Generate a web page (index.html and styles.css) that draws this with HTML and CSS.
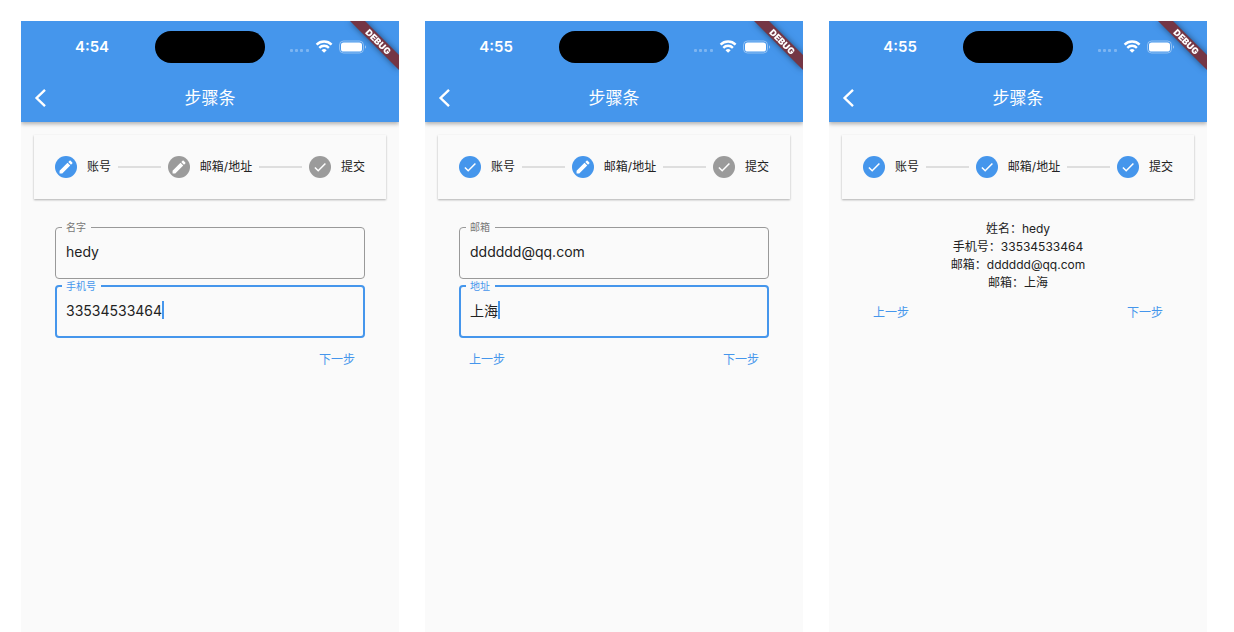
FILE: index.html
```html
<!DOCTYPE html>
<html lang="zh-CN">
<head>
    <meta charset="UTF-8">
    <meta name="viewport" content="width=device-width, initial-scale=1.0">
    <title>步骤条</title>
    <link rel="stylesheet" href="styles.css">
</head>
<body>
    <!-- Iconos compartidos -->
    <svg class="sprite" aria-hidden="true">
        <symbol id="edit" viewBox="0 0 22 22">
            <circle cx="11" cy="11" r="11" fill="currentColor" />
            <path transform="translate(2.4 2.4) scale(.72)" fill="#fff" d="M3 17.25V21h3.75L17.81 9.94l-3.75-3.75L3 17.25zM20.71 7.04c.39-.39.39-1.02 0-1.41l-2.34-2.34c-.39-.39-1.02-.39-1.41 0l-1.83 1.83 3.75 3.75 1.83-1.83z" />
        </symbol>
        <symbol id="check" viewBox="0 0 22 22">
            <circle cx="11" cy="11" r="11" fill="currentColor" />
            <path d="M5.9 11.5l3.3 3.3 7.2-7.4" fill="none" stroke="#fff" stroke-width="1.5" />
        </symbol>
        <symbol id="back" viewBox="0 0 12 18">
            <path d="M11 .9L2.6 9l8.4 8.1" fill="none" stroke="#fff" stroke-width="2.4" />
        </symbol>
        <symbol id="signal" viewBox="0 0 78 14">
            <g fill="#fff" fill-opacity=".3">
                <rect x="0" y="9" width="3" height="3" rx="1" />
                <rect x="5" y="9" width="3" height="3" rx="1" />
                <rect x="10" y="9" width="3" height="3" rx="1" />
                <rect x="16" y="9" width="3" height="3" rx="1" />
            </g>
            <g fill="none" stroke="#fff" stroke-width="2.4">
                <path d="M26.6 4.6a10.6 10.6 0 0 1 15 0" />
                <path d="M29.3 7.8a6.8 6.8 0 0 1 9.6 0" />
            </g>
            <path d="M34.1 12.8l-2.6-2.5a3.7 3.7 0 0 1 5.2 0z" fill="#fff" />
            <rect x="49.5" y="1" width="24" height="12" rx="4" fill="none" stroke="#fff" stroke-opacity=".4" />
            <rect x="51" y="2.5" width="21" height="9" rx="2.6" fill="#fff" />
            <path d="M75 5.3v3.4c1.4-.6 1.4-2.8 0-3.4z" fill="#fff" fill-opacity=".5" />
        </symbol>
    </svg>

    <main class="phones">
        <section class="phone">
            <header class="header">
                <div class="status">
                    <span class="time">4:54</span>
                    <span class="island"></span>
                    <svg class="signal"><use href="#signal" /></svg>
                </div>
                <div class="navbar">
                    <button class="back" type="button" aria-label="返回"><svg><use href="#back" /></svg></button>
                    <h1>步骤条</h1>
                </div>
                <svg class="debug" viewBox="0 0 50 50">
                    <path class="ribbon" d="M1 0H16L50 34V49z" />
                    <text class="ribbon-text" x="29" y="24" transform="rotate(45 29 21)">DEBUG</text>
                </svg>
            </header>
            <ol class="steps">
                <li class="step active"><svg><use href="#edit" /></svg>账号</li>
                <li class="line"></li>
                <li class="step"><svg><use href="#edit" /></svg>邮箱/地址</li>
                <li class="line"></li>
                <li class="step"><svg><use href="#check" /></svg>提交</li>
            </ol>
            <form class="panel">
                <div class="fields">
                    <fieldset class="field">
                        <legend><label for="name">名字</label></legend>
                        <div class="value"><input id="name" type="text" value="hedy"></div>
                    </fieldset>
                    <fieldset class="field focused">
                        <legend><label for="phone">手机号</label></legend>
                        <div class="value"><input id="phone" type="text" value="33534533464"><span class="caret"></span></div>
                    </fieldset>
                </div>
                <div class="actions">
                    <button class="next" type="button">下一步</button>
                </div>
            </form>
        </section>

        <section class="phone">
            <header class="header">
                <div class="status">
                    <span class="time">4:55</span>
                    <span class="island"></span>
                    <svg class="signal"><use href="#signal" /></svg>
                </div>
                <div class="navbar">
                    <button class="back" type="button" aria-label="返回"><svg><use href="#back" /></svg></button>
                    <h1>步骤条</h1>
                </div>
                <svg class="debug" viewBox="0 0 50 50">
                    <path class="ribbon" d="M1 0H16L50 34V49z" />
                    <text class="ribbon-text" x="29" y="24" transform="rotate(45 29 21)">DEBUG</text>
                </svg>
            </header>
            <ol class="steps">
                <li class="step active"><svg><use href="#check" /></svg>账号</li>
                <li class="line"></li>
                <li class="step active"><svg><use href="#edit" /></svg>邮箱/地址</li>
                <li class="line"></li>
                <li class="step"><svg><use href="#check" /></svg>提交</li>
            </ol>
            <form class="panel">
                <div class="fields">
                    <fieldset class="field">
                        <legend><label for="email">邮箱</label></legend>
                        <div class="value"><input id="email" type="text" value="dddddd@qq.com"></div>
                    </fieldset>
                    <fieldset class="field focused">
                        <legend><label for="address">地址</label></legend>
                        <div class="value"><input id="address" type="text" value="上海"><span class="caret"></span></div>
                    </fieldset>
                </div>
                <div class="actions">
                    <button type="button">上一步</button>
                    <button class="next" type="button">下一步</button>
                </div>
            </form>
        </section>

        <section class="phone">
            <header class="header">
                <div class="status">
                    <span class="time">4:55</span>
                    <span class="island"></span>
                    <svg class="signal"><use href="#signal" /></svg>
                </div>
                <div class="navbar">
                    <button class="back" type="button" aria-label="返回"><svg><use href="#back" /></svg></button>
                    <h1>步骤条</h1>
                </div>
                <svg class="debug" viewBox="0 0 50 50">
                    <path class="ribbon" d="M1 0H16L50 34V49z" />
                    <text class="ribbon-text" x="29" y="24" transform="rotate(45 29 21)">DEBUG</text>
                </svg>
            </header>
            <ol class="steps">
                <li class="step active"><svg><use href="#check" /></svg>账号</li>
                <li class="line"></li>
                <li class="step active"><svg><use href="#check" /></svg>邮箱/地址</li>
                <li class="line"></li>
                <li class="step active"><svg><use href="#check" /></svg>提交</li>
            </ol>
            <div class="panel">
                <div class="summary">
                    <p>姓名：hedy</p>
                    <p>手机号：33534533464</p>
                    <p>邮箱：dddddd@qq.com</p>
                    <p>邮箱：上海</p>
                </div>
                <div class="actions">
                    <button type="button">上一步</button>
                    <button class="next" type="button">下一步</button>
                </div>
            </div>
        </section>
    </main>
</body>
</html>
```
FILE: styles.css
```css
* {
    box-sizing: border-box;
}
body {
    margin: 0;
    background-color: #fff;
    font-family: Inter, "Noto Sans CJK SC", sans-serif;
    font-size: 12px;
    color: #222;
}
button, input {
    font-family: inherit;
    color: inherit;
    background: none;
    border: none;
    padding: 0;
}
button {
    cursor: pointer;
}
.sprite {
    position: absolute;
    width: 0;
    height: 0;
}
.phones {
    display: grid;
    grid-template-columns: repeat(3, 1fr);
    gap: 26px;
    min-height: 100vh;
    padding: 21px 27px 0 21px;
}
.phone {
    background-color: #fafafa;
}

/* Cabecera */
.header {
    position: relative;
    background-color: #4596ec;
    color: #fff;
    box-shadow: 0 2px 4px rgba(0, 0, 0, 0.3);
    clip-path: inset(0 0 -8px 0);
}
.status {
    display: grid;
    grid-template-columns: 1fr 110px 1fr;
    align-items: center;
    justify-items: center;
    padding: 10px 0;
}
.time {
    padding-left: 8px;
    font-size: 15px;
    font-weight: 600;
    line-height: 16px;
}
.island {
    width: 110px;
    height: 32px;
    border-radius: 16px;
    background-color: #000;
}
.signal {
    width: 78px;
    height: 14px;
    margin-right: 6px;
}
.navbar {
    display: grid;
    grid-template-columns: 40px 1fr 40px;
    align-items: center;
    height: 49px;
}
.navbar h1 {
    margin: 0;
    font-size: 17px;
    font-weight: 400;
    line-height: 24px;
    text-align: center;
}
.back {
    display: flex;
    padding-left: 13px;
}
.back svg {
    width: 12px;
    height: 18px;
}
.debug {
    position: absolute;
    top: 0;
    right: 0;
    width: 50px;
    height: 50px;
    filter: drop-shadow(0 0 3px rgba(0, 0, 0, 0.5));
}
.ribbon {
    fill: #743645;
}
.ribbon-text {
    fill: #fff;
    font-size: 9px;
    font-weight: 900;
    text-anchor: middle;
}

/* Pasos */
.steps {
    display: flex;
    align-items: center;
    height: 64px;
    margin: 13px 13px 0;
    padding: 0 21px;
    list-style: none;
    box-shadow: 0 1px 2px rgba(0, 0, 0, 0.3);
}
.step {
    display: flex;
    align-items: center;
    gap: 10px;
    line-height: 18px;
    white-space: nowrap;
}
.step svg {
    width: 22px;
    height: 22px;
    color: #9b9b9b;
}
.step.active svg {
    color: #4596ec;
}
.line {
    flex: 1;
    height: 2px;
    margin: 0 7px;
    background-color: #dedede;
}

/* Formulario */
.panel {
    padding: 21px 34px 0;
}
.fields {
    display: grid;
    gap: 1px;
    padding: 1px 0;
}
.field {
    min-width: 0;
    height: 58px;
    margin: 0;
    padding: 0 10px;
    border: 1px solid #999;
    border-radius: 4px;
}
.field.focused {
    padding: 0 9px;
    border: 2px solid #4596ec;
}
legend {
    margin-left: -4px;
    padding: 0 5px 0 4px;
    font-size: 10px;
    line-height: 12px;
    color: #777;
}
.focused legend {
    color: #4596ec;
}
.value {
    display: flex;
    align-items: center;
    height: 36px;
}
.value input {
    field-sizing: content;
    font-size: 14px;
    outline: none;
}
.caret {
    width: 2px;
    height: 18px;
    background-color: #4596ec;
}
.summary p {
    margin: 0;
    line-height: 18px;
    text-align: center;
}
.actions {
    display: flex;
    align-items: center;
    height: 38px;
    padding: 0 10px;
}
.actions button {
    font-size: 12px;
    color: #4596ec;
}
.next {
    margin-left: auto;
}
```
